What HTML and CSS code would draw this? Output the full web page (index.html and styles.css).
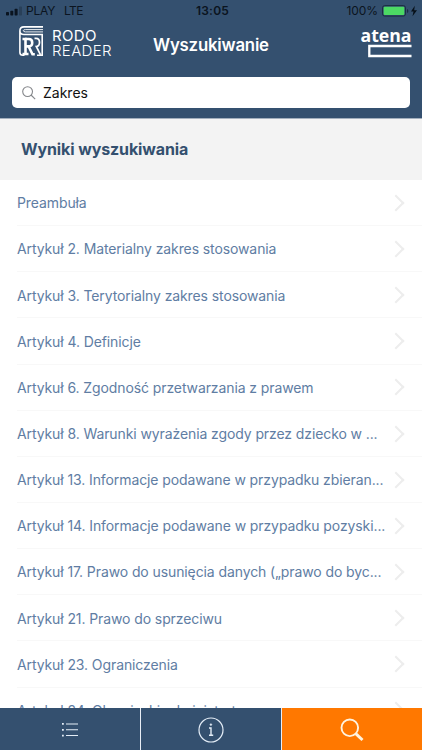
FILE: index.html
```html
<!DOCTYPE html>
<html lang="pl">
<head>
<meta charset="utf-8">
<meta name="viewport" content="width=device-width, initial-scale=1">
<title>RODO Reader</title>
<link rel="stylesheet" href="styles.css">
</head>
<body>
<div class="app">
  <div class="status">
    <svg class="signal" width="17" height="10" viewBox="0 0 17 10"><g fill="#0a1420"><rect x="0" y="6" width="3" height="3.5" rx=".7"/><rect x="4.3" y="4.8" width="3" height="4.7" rx=".7"/><rect x="8.6" y="2.8" width="3" height="6.7" rx=".7"/></g><rect x="13" y=".5" width="3" height="9" rx=".7" fill="#294059"/></svg>
    <span class="carrier">PLAY</span><span class="net">LTE</span>
    <span class="clock">13:05</span>
    <span class="pct">100%</span>
    <svg class="battery" width="36" height="12" viewBox="0 0 36 12"><rect x=".5" y=".6" width="23" height="10.5" rx="2.2" fill="none" stroke="#1b2c40"/><rect x="1.7" y="1.8" width="20.6" height="8.1" rx="1" fill="#4cd964"/><path d="M25 4v4q1.4-.5 1.4-2T25 4z" fill="#1b2c40"/><path d="M32.8.8 29 6.5h2.5l-1 4.7L35 5.2h-2.8z" fill="#071019"/></svg>
  </div>
  <header class="header">
    <div class="brand">
      <svg width="26" height="32" viewBox="0 0 26 32" fill="none" stroke="#fff"><path d="M24 .9H5Q.9.900.9 5v21.500Q.9 29.300 4 29.300H5.500M24 8.500H5Q.9 8.500.9 5M23.200 8.500V29.300H18" stroke-width="1.600"/><path d="M24 3.600H6.500Q4.300 3.600 4.300 4.700T6.500 5.900H24" stroke-width=".9"/><path d="M3.500 13H6M6.500 11.700V29.300M3.500 28H9.500" stroke-width="2.600"/><path d="M6 13h3.800q3.400 0 3.400 3.700T9.800 20.400H7M9.800 20.700 13.500 28.300H15.800" stroke-width="2.600"/><path d="M15.500 12.300h1.500q3.500 0 3.500 4t-3.200 4.200l4.200 8.300" stroke-width="1.700"/></svg>
      <div class="brand-name"><span class="rodo">RODO</span><span class="reader">READER</span></div>
    </div>
    <h1 class="title">Wyszukiwanie</h1>
    <svg class="atena" width="54" height="32" viewBox="0 0 54 32"><text x=".5" y="15" textLength="51" lengthAdjust="spacingAndGlyphs" class="atena-text">atena</text><path d="M51.500 19H9.300V29H51.500" fill="none" stroke="#fff" stroke-width="2.300"/></svg>
  </header>
  <div class="search">
    <div class="field"><svg width="14" height="14" viewBox="0 0 14 14" fill="none" stroke="#85878b" stroke-width="1.100"><circle cx="5.600" cy="5.600" r="4.900"/><path d="m9 9 4.200 4.200"/></svg><span class="query">Zakres</span></div>
  </div>
  <h2 class="section"><span>Wyniki wyszukiwania</span></h2>
  <main class="list">
    <div class="row"><span>Preambuła</span><i class="chev"></i></div>
    <div class="row"><span>Artykuł 2. Materialny zakres stosowania</span><i class="chev"></i></div>
    <div class="row"><span>Artykuł 3. Terytorialny zakres stosowania</span><i class="chev"></i></div>
    <div class="row"><span>Artykuł 4. Definicje</span><i class="chev"></i></div>
    <div class="row"><span>Artykuł 6. Zgodność przetwarzania z prawem</span><i class="chev"></i></div>
    <div class="row"><span>Artykuł 8. Warunki wyrażenia zgody przez dziecko w ...</span><i class="chev"></i></div>
    <div class="row"><span>Artykuł 13. Informacje podawane w przypadku zbieran...</span><i class="chev"></i></div>
    <div class="row"><span>Artykuł 14. Informacje podawane w przypadku pozyski...</span><i class="chev"></i></div>
    <div class="row"><span>Artykuł 17. Prawo do usunięcia danych („prawo do byc...</span><i class="chev"></i></div>
    <div class="row"><span>Artykuł 21. Prawo do sprzeciwu</span><i class="chev"></i></div>
    <div class="row"><span>Artykuł 23. Ograniczenia</span><i class="chev"></i></div>
    <div class="row"><span>Artykuł 24. Obowiązki administratora</span><i class="chev"></i></div>
  </main>
  <nav class="tabs">
    <div class="tab"><svg width="16" height="16" viewBox="0 0 16 16" fill="#e4edf7"><path d="M0 1h1.800v1.800H0zM0 6.900h1.800v1.800H0zM0 12.700h1.800v1.800H0zM4 1.400h12v1.100H4zM4 7.200h12v1.100H4zM4 13h12v1.100H4z"/></svg></div>
    <div class="tab"><svg width="26" height="26" viewBox="0 0 26 26" fill="none" stroke="#e4edf7" stroke-width="1.200"><circle cx="13" cy="13" r="12"/><path d="M11 11h2v7M11 18.200h4.200" stroke-width="1.400"/><circle cx="12.900" cy="7.600" r=".9" fill="#e4edf7" stroke-width=".5"/></svg></div>
    <div class="tab active"><svg width="24" height="24" viewBox="0 0 24 24" fill="none" stroke="#fff3df"><circle cx="9.800" cy="9.800" r="8.300" stroke-width="1.900"/><path d="m15.700 15.700 6.800 6.300" stroke-width="3"/></svg></div>
  </nav>
</div>
</body>
</html>
```
FILE: styles.css
```css
* { box-sizing: border-box; }
body { margin: 0; font-family: Inter, "Liberation Sans", sans-serif; background: #fff; }
svg { display: block; flex: none; }
.app { width: 422px; height: 750px; display: flex; flex-direction: column; overflow: hidden; }
.status { height: 22px; flex: none; background: #34506f; display: grid; grid-template-columns: 20px 38px 131px 1fr auto 40px; align-items: center; padding-left: 6px; font-size: 12px; line-height: 22px; color: #0b1420; }
.carrier { letter-spacing: -.2px; }
.net { letter-spacing: -.6px; }
.clock { font-weight: 600; letter-spacing: .2px; padding-left: 1px; }
.pct { letter-spacing: -.1px; padding-right: 4px; }
.header { height: 47px; flex: none; background: #34506f; color: #fff; display: grid; grid-template-columns: 134px 1fr 62px; padding-left: 19px; }
.brand { display: flex; padding-top: 4px; }
.brand-name { display: flex; flex-direction: column; padding: 2px 0 0 7px; font-size: 15px; line-height: 15px; }
.rodo { font-weight: 400; letter-spacing: .35px; }
.reader { font-weight: 300; letter-spacing: .35px; }
.title { margin: 0; font-size: 16.8px; line-height: 46px; font-weight: 600; letter-spacing: -.2px; }
.atena { margin-top: 5px; }
.atena-text { font: 700 18.500px "Open Sans", sans-serif; fill: #fff; }
.search { height: 50px; flex: none; background: #34506f; padding: 8px 12px 0 12px; border-bottom: 1px solid #a3afbd; }
.field { height: 31px; width: 398px; border-radius: 5px; background: #fff; display: flex; align-items: center; padding-left: 10px; color: #111; font-size: 14px; }
.query { margin-left: 7px; letter-spacing: 0; }
.section { height: 61px; flex: none; margin: 0; background: #f3f3f3; padding-left: 21px; color: #34506f; font-size: 16px; line-height: 61px; font-weight: 700; letter-spacing: -.11px; }
.list { flex: 1; min-height: 0; overflow: hidden; padding-left: 17px; }
.row { height: 46.150px; display: flex; align-items: center; justify-content: space-between; border-bottom: 1px solid #f8f8f8; padding: .5px 20px 0 0; font-size: 14px; letter-spacing: -.1px; color: #607da3; white-space: nowrap; }
.chev { width: 12px; height: 12px; border: solid #ededed; border-width: 2px 2px 0 0; transform: rotate(45deg); flex: none; }
.tabs { height: 42px; flex: none; display: grid; grid-template-columns: 141px 141px 140px; background: #34506f; }
.tab { display: flex; align-items: center; justify-content: center; border-right: 1px solid #e8eef5; padding-top: 2px; }
.active { background: #ff7800; border-right: 0; }
```
